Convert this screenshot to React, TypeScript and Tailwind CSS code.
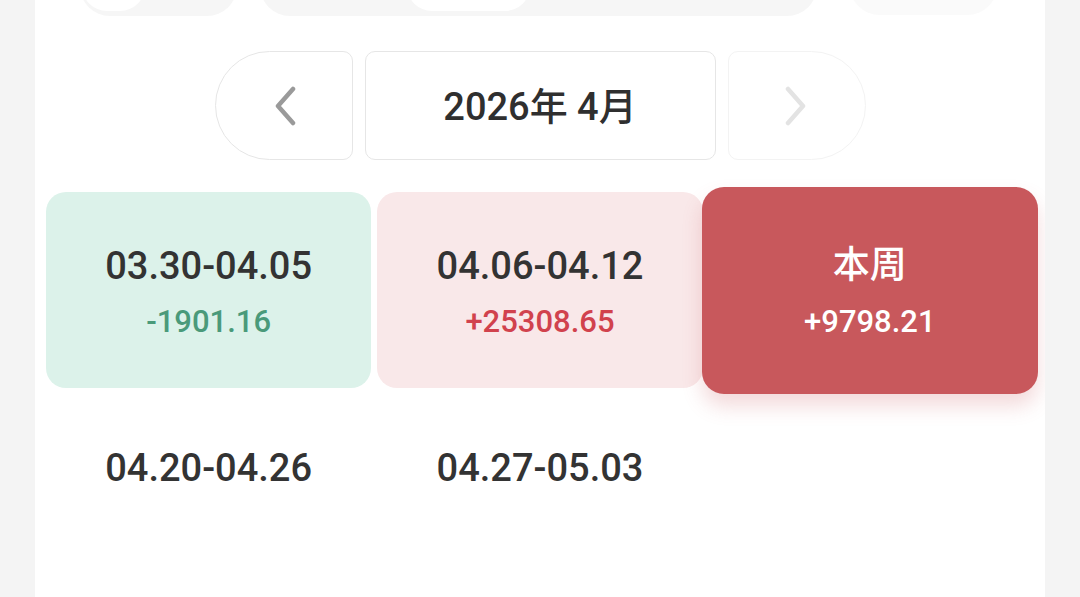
import React from 'react';

type Week = {
  label: string;
  amount?: string;
  tone: 'down' | 'up' | 'current' | 'none';
};

const weeks: Week[] = [
  { label: '03.30-04.05', amount: '-1901.16', tone: 'down' },
  { label: '04.06-04.12', amount: '+25308.65', tone: 'up' },
  { label: '本周', amount: '+9798.21', tone: 'current' },
  { label: '04.20-04.26', tone: 'none' },
  { label: '04.27-05.03', tone: 'none' },
];

const font = { fontFamily: "Roboto, 'Noto Sans CJK SC', sans-serif" };

function WeekCell({ week }: { week: Week }) {
  if (week.tone === 'current') {
    return (
      <div className="relative z-10 -ml-[7px] -mr-[4px] -mt-[5px] -mb-[6px] flex flex-col items-center justify-center rounded-[22px] bg-[#c8585c] pt-[3px] text-white shadow-[0_12px_20px_rgba(200,88,92,0.22)]">
        <div className="text-[37px] font-medium leading-[48px]">{week.label}</div>
        <div className="mt-[12px] text-[31px] font-medium leading-[40px]">{week.amount}</div>
      </div>
    );
  }

  const bg =
    week.tone === 'down' ? 'bg-[#dcf2ea]' : week.tone === 'up' ? 'bg-[#f9e8e9]' : 'bg-white';
  const amountColor = week.tone === 'down' ? 'text-[#4a9a7a]' : 'text-[#d1424d]';

  return (
    <div className={`flex h-[196px] flex-col items-center justify-center rounded-[20px] pt-[3px] ${bg}`}>
      <div className="text-[38px] font-medium leading-[48px] text-[#333333]">{week.label}</div>
      <div className={`mt-[12px] text-[31px] font-medium leading-[40px] ${amountColor}`}>
        {week.amount ?? '\u00a0'}
      </div>
    </div>
  );
}

export default function App() {
  return (
    <div className="min-h-screen bg-[#f4f4f4]" style={font}>
      <div className="mx-[35px] min-h-[597px] overflow-hidden bg-white">
        {/* tab bar, mostly scrolled off the top */}
        <div className="-mt-[44px] flex h-[60px] items-start">
          <div className="ml-[45px] flex h-[60px] w-[157px] items-end rounded-full bg-[#f6f6f6] pb-[5px] pl-[2px]">
            <div className="h-[50px] w-[63px] rounded-full bg-white" />
          </div>
          <div className="ml-[23px] flex h-[60px] w-[557px] items-end rounded-full bg-[#f6f6f6] pb-[5px] pl-[147px]">
            <div className="h-[50px] w-[123px] rounded-full bg-white" />
          </div>
          <div className="ml-[33px] h-[59px] w-[147px] rounded-full bg-[#fafafa]" />
        </div>

        {/* month switcher */}
        <div className="mt-[35px] flex justify-center gap-[12px]">
          <button className="flex h-[109px] w-[138px] items-center justify-center rounded-l-[55px] rounded-r-[10px] border border-[#e6e6e6] bg-white">
            <svg width="28" height="40" viewBox="0 0 28 40" fill="none" className="ml-[3px]">
              <path d="M22 3 L7 20 L22 37" stroke="#9a9a9a" strokeWidth="4.5" strokeLinecap="round" strokeLinejoin="round" />
            </svg>
          </button>
          <div className="flex h-[109px] w-[351px] items-center justify-center rounded-[10px] border border-[#e6e6e6] bg-white">
            <span className="mt-[3px] text-[38px] font-medium text-[#2f2f2f]">2026年 4月</span>
          </div>
          <button className="flex h-[109px] w-[138px] items-center justify-center rounded-l-[10px] rounded-r-[55px] border border-[#f3f3f3] bg-white">
            <svg width="28" height="40" viewBox="0 0 28 40" fill="none" className="ml-[-2px]">
              <path d="M6 3 L21 20 L6 37" stroke="#e3e3e3" strokeWidth="4.5" strokeLinecap="round" strokeLinejoin="round" />
            </svg>
          </button>
        </div>

        {/* weeks */}
        <div className="mt-[32px] grid grid-cols-3 gap-[6px] px-[11px]">
          {weeks.map((w) => (
            <WeekCell key={w.label} week={w} />
          ))}
        </div>
      </div>
    </div>
  );
}
